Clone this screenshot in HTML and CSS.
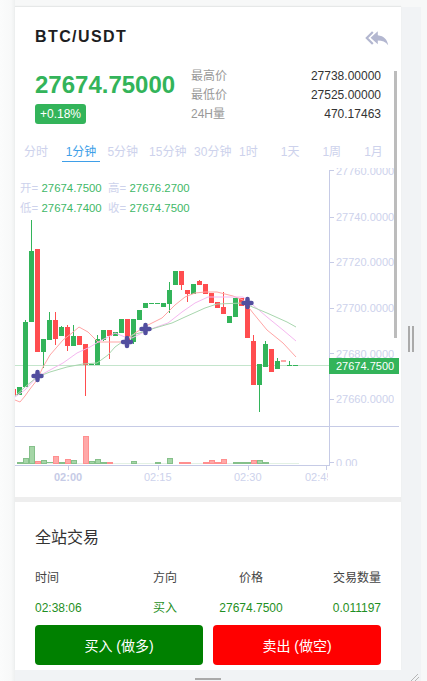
FILE: index.html
```html
<!DOCTYPE html>
<html lang="zh">
<head>
<meta charset="utf-8">
<title>BTC/USDT</title>
<link rel="stylesheet" href="styles.css">
</head>
<body>
<div class="shell">
  <main class="card">
    <header class="head">
      <h1 class="pair">BTC/USDT</h1>
      <svg class="back" viewBox="0 0 24 15" width="24" height="15">
        <path class="back-chev" d="M7.800 1 1.800 7l6 6"/>
        <path class="back-arrow" d="M12.800 .2 5.600 6.800l7.200 6.500V9.400c4.400 0 7.800 1.200 10.400 4.800C22.400 8.800 19 4.800 12.800 4.200z"/>
      </svg>
    </header>
    <section class="quote">
      <div class="quote-main">
        <div class="price">27674.75000</div>
        <span class="badge">+0.18%</span>
      </div>
      <dl class="stats">
        <div class="stat"><dt>最高价</dt><dd>27738.00000</dd></div>
        <div class="stat"><dt>最低价</dt><dd>27525.00000</dd></div>
        <div class="stat"><dt>24H量</dt><dd>470.17463</dd></div>
      </dl>
    </section>
    <nav class="tabs">
      <span class="tab">分时</span>
      <span class="tab active">1分钟</span>
      <span class="tab">5分钟</span>
      <span class="tab wide">15分钟</span>
      <span class="tab wide">30分钟</span>
      <span class="tab">1时</span>
      <span class="tab">1天</span>
      <span class="tab">1周</span>
      <span class="tab">1月</span>
    </nav>
    <svg class="chart" viewBox="15 168 386 329" width="386" height="329">
      <defs>
        <clipPath id="plot"><rect x="15" y="168" width="314" height="258"/></clipPath>
        <clipPath id="xlabels"><rect x="15" y="466" width="313" height="20"/></clipPath>
        <clipPath id="ylabels"><rect x="330" y="168" width="64" height="298"/></clipPath>
      </defs>

      <g class="legend">
        <text x="20" y="192">开=</text><text class="up" x="41.500" y="192">27674.7500</text>
        <text x="108" y="192">高=</text><text class="up" x="129.500" y="192">27676.2700</text>
        <text x="20" y="212">低=</text><text class="up" x="41.500" y="212">27674.7400</text>
        <text x="108" y="212">收=</text><text class="up" x="129.500" y="212">27674.7500</text>
      </g>

      <line class="last" x1="15" y1="365.500" x2="329" y2="365.500"/>

      <g clip-path="url(#plot)">
        <g class="ca-red">
          <rect x="11" y="389" width="5" height="6"/>
          <rect x="35" y="249" width="5" height="103"/>
          <rect x="55" y="312" width="1" height="33"/><rect x="53" y="320" width="5" height="19"/>
          <rect x="67" y="325" width="1" height="26"/><rect x="65" y="327" width="5" height="19"/>
          <rect x="77" y="336" width="5" height="9"/>
          <rect x="85" y="344" width="1" height="52"/><rect x="83" y="344" width="5" height="21"/>
          <rect x="109" y="336" width="1" height="23"/><rect x="107" y="330" width="5" height="6"/>
          <rect x="125" y="319" width="5" height="23"/>
          <rect x="181" y="285" width="1" height="5"/><rect x="179" y="271" width="5" height="14"/>
          <rect x="187" y="294" width="1" height="8"/><rect x="185" y="290" width="5" height="4"/>
          <rect x="199" y="280" width="1" height="2"/><rect x="197" y="281" width="5" height="4"/>
          <rect x="203" y="284" width="5" height="10"/>
          <rect x="209" y="293" width="5" height="10"/>
          <rect x="215" y="302" width="5" height="6"/>
          <rect x="223" y="292" width="1" height="16"/><rect x="221" y="307" width="5" height="7"/>
          <rect x="239" y="298" width="5" height="8"/>
          <rect x="245" y="305" width="5" height="33"/>
          <rect x="253" y="335" width="1" height="7"/><rect x="251" y="341" width="5" height="44"/>
          <rect x="269" y="349" width="5" height="23"/>
          <rect x="281" y="360.500" width="5" height="1"/>
        </g>
        <g class="ca-green">
          <rect x="17" y="387" width="5" height="8"/>
          <rect x="25" y="320" width="1" height="3"/><rect x="23" y="322" width="5" height="65"/>
          <rect x="31" y="220" width="1" height="32"/><rect x="29" y="251" width="5" height="71"/>
          <rect x="43" y="352" width="1" height="16"/><rect x="41" y="339" width="5" height="13"/>
          <rect x="49" y="312" width="1" height="9"/><rect x="47" y="320" width="5" height="20"/>
          <rect x="61" y="326" width="1" height="2"/><rect x="59" y="327" width="5" height="9"/>
          <rect x="73" y="325" width="1" height="12"/><rect x="71" y="336" width="5" height="10"/>
          <rect x="89" y="364" width="5" height="1"/>
          <rect x="97" y="335" width="1" height="5"/><rect x="95" y="339" width="5" height="26"/>
          <rect x="103" y="330" width="1" height="11"/><rect x="101" y="330" width="5" height="10"/>
          <rect x="113" y="332" width="5" height="4"/>
          <rect x="119" y="319" width="5" height="14"/>
          <rect x="133" y="342" width="1" height="2"/><rect x="131" y="319" width="5" height="23"/>
          <rect x="137" y="310" width="5" height="10"/>
          <rect x="143" y="303" width="5" height="5"/>
          <rect x="149" y="303" width="5" height="1"/>
          <rect x="155" y="303" width="5" height="1"/>
          <rect x="161" y="303" width="5" height="4"/>
          <rect x="169" y="282" width="1" height="31"/><rect x="167" y="290" width="5" height="14"/>
          <rect x="173" y="271" width="5" height="14"/>
          <rect x="191" y="284" width="5" height="10"/>
          <rect x="227" y="316" width="5" height="7"/>
          <rect x="233" y="298" width="5" height="19"/>
          <rect x="259" y="385" width="1" height="27"/><rect x="257" y="364" width="5" height="21"/>
          <rect x="265" y="341" width="1" height="4"/><rect x="263" y="344" width="5" height="23"/>
          <rect x="277" y="358" width="1" height="4"/><rect x="275" y="361" width="5" height="8"/>
          <rect x="289" y="361" width="1" height="4"/><rect x="287" y="365" width="5" height="1"/>
          <rect x="293" y="365" width="5" height="1"/>
        </g>
        <polyline class="ma ma-red" points="15,400 20,402 25,396 30,389 37,380 43,367 50,355 63,340 72,333 79,327 88,332 98,342 110,342 125,342 135,333 148,325 162,318 175,305 185,297 195,293 205,292 217,292 233,296 243,300 253,313 267,330 283,343 296,357"/>
        <polyline class="ma ma-pink" points="15,397 25,390 37,377 50,370 63,363 77,353 90,347 100,341 110,336 115,333 125,337 132,338 140,334 148,330 168,323 182,312 195,303 208,297 217,297 243,297 253,305 267,317 283,330 296,341"/>
        <polyline class="ma ma-green" points="15,396 25,387 37,377 50,372 67,367 83,364 97,363 108,355 115,347 132,335 143,332 155,328 172,323 185,317 205,308 217,304 243,303 267,313 287,322 296,327"/>
        <g class="mark">
          <path d="M37.500 372v8M33.500 376h8"/>
          <path d="M127 338v8M123 342h8"/>
          <path d="M145.500 325v8M141.500 329h8"/>
          <path d="M247.500 299v8M243.500 303h8"/>
        </g>
      </g>

      <g class="vol-green">
        <rect x="17.500" y="462.500" width="5" height="1"/>
        <rect x="23.500" y="458.500" width="5" height="5"/>
        <rect x="29.500" y="446.500" width="5" height="17"/>
        <rect x="41.500" y="460.500" width="5" height="3"/>
        <rect x="47.500" y="462.500" width="5" height="1"/>
        <rect x="59.500" y="462.500" width="5" height="1"/>
        <rect x="71.500" y="460.500" width="5" height="3"/>
        <rect x="89.500" y="461.500" width="5" height="2"/>
        <rect x="95.500" y="459.500" width="5" height="4"/>
        <rect x="101.500" y="462.500" width="5" height="1"/>
        <rect x="131.500" y="461.500" width="5" height="2"/>
        <rect x="155.500" y="462.500" width="5" height="1"/>
        <rect x="167.500" y="458.500" width="5" height="5"/>
        <rect x="233.500" y="462.500" width="17" height="1"/>
        <rect x="257.500" y="460.500" width="5" height="3"/>
        <rect x="263.500" y="462.500" width="5" height="1"/>
      </g>
      <g class="vol-red">
        <rect x="35.500" y="461.500" width="5" height="2"/>
        <rect x="53.500" y="456.500" width="5" height="7"/>
        <rect x="65.500" y="459.500" width="5" height="4"/>
        <rect x="83.500" y="436.500" width="5" height="27"/>
        <rect x="107.500" y="462.500" width="5" height="1"/>
        <rect x="179.500" y="462.500" width="11" height="1"/>
        <rect x="203.500" y="462.500" width="5" height="1"/>
        <rect x="209.500" y="460.500" width="5" height="3"/>
        <rect x="215.500" y="462.500" width="5" height="1"/>
        <rect x="221.500" y="459.500" width="5" height="4"/>
        <rect x="251.500" y="460.500" width="5" height="3"/>
      </g>
      <path class="vol-faint" d="M47 463.500h6M77 463.500h6M113 463.500h18M137 463.500h18M161 463.500h6M191 463.500h12M227 463.500h6M269 463.500h30"/>

      <path class="axis" d="M15 426.500H399M15 465.500H329.500M329.500 170V466"/>
      <path class="axis" d="M329 170.500h5M329 217.500h5M329 262.500h5M329 308.500h5M329 353.500h5M329 399.500h5M329 462.500h5M68.500 466v4M158.500 466v4M248.500 466v4M326.500 466v4"/>

      <g clip-path="url(#ylabels)" class="ylabel">
        <text x="336" y="175">27760.0000</text>
        <text x="336" y="221">27740.0000</text>
        <text x="336" y="266">27720.0000</text>
        <text x="336" y="312">27700.0000</text>
        <text x="336" y="358">27680.0000</text>
        <text x="336" y="403">27660.0000</text>
        <text x="336" y="467">0.00</text>
      </g>
      <rect class="tag" x="329" y="358" width="70" height="16"/>
      <text class="tag-text" x="336" y="370">27674.7500</text>
      <g clip-path="url(#xlabels)" class="xlabel">
        <text class="strong" x="54" y="481">02:00</text>
        <text x="144" y="481">02:15</text>
        <text x="234" y="481">02:30</text>
        <text x="305" y="481">02:45</text>
      </g>
    </svg>

    <section class="trades">
      <h2 class="trades-title">全站交易</h2>
      <div class="trade-grid head-row">
        <span>时间</span><span>方向</span><span class="center">价格</span><span class="right">交易数量</span>
      </div>
      <div class="trade-grid data-row">
        <span>02:38:06</span><span>买入</span><span class="center">27674.7500</span><span class="right">0.011197</span>
      </div>
      <div class="actions">
        <button class="btn buy">买入 (做多)</button>
        <button class="btn sell">卖出 (做空)</button>
      </div>
    </section>
  </main>

  <div class="scrollbar"></div>
  <div class="split-v"></div>
  <div class="split-h"></div>
  <svg class="grip" viewBox="0 0 10 8" width="10" height="8">
    <path d="M1 8 8 1M5 8 9 4"/>
  </svg>
</div>
</body>
</html>
```
FILE: styles.css
```css
* { box-sizing: border-box; }
html, body { margin: 0; padding: 0; height: 100%; }
body {
  overflow: hidden;
  background: linear-gradient(90deg, #fbfcfc 0, #f8f9f9 11px, #eef0f0 15px, #f7f8f8 15px);
  font-family: "Liberation Sans", "Noto Sans CJK SC", sans-serif;
  color: #333;
}
.shell {
  position: relative;
  margin: 7px 0 0 15px;
  width: 406px;
  height: 674px;
  padding-right: 20px;
  background: #f1f3f5;
}
.card {
  height: 663px;
  background: #fff;
  box-shadow: 0 -1px 1px #e6e8e8;
}
.head {
  height: 59px;
  padding: 0 12px 0 20px;
  display: flex;
  align-items: center;
  justify-content: space-between;
}
.pair {
  margin: 0;
  font-size: 16px;
  font-weight: 700;
  letter-spacing: 1.4px;
  color: #1d1d22;
}
.back { margin-top: 3px; }
.back-chev { fill: none; stroke: #b3b7d0; stroke-width: 2.200; }
.back-arrow { fill: #b3b7d0; }
.quote { display: flex; padding: 0 20px; height: 58px; }
.quote-main { width: 156px; padding-top: 5px; }
.price {
  font-size: 24px;
  line-height: 28px;
  font-weight: 700;
  color: #33b45a;
}
.badge {
  display: inline-block;
  margin-top: 5px;
  height: 20px;
  line-height: 20px;
  padding: 0 5px;
  border-radius: 3px;
  background: #33b45a;
  color: #fff;
  font-size: 12px;
  font-weight: 400;
}
.stats { flex: 1; margin: 0; padding-top: 1px; }
.stat {
  display: flex;
  justify-content: space-between;
  height: 19px;
  line-height: 19px;
  font-size: 12px;
}
.stat dt { color: #999; }
.stat dd { margin: 0; color: #333; }
.tabs {
  display: flex;
  margin-top: 17px;
  padding: 1px 0 0 9px;
  height: 21px;
  font-size: 12px;
  line-height: 20px;
  color: #cdd2ec;
}
.tab { width: 41.7px; flex: none; white-space: nowrap; }
.tab.wide { width: 45px; }
.tab.active {
  width: 38px;
  margin-left: -4px;
  margin-right: 7.7px;
  padding-left: 4px;
  color: #3f9fe8;
  border-bottom: 1px solid #3f9fe8;
}
.chart { display: block; margin-top: 6px; }
.legend text { font-size: 11.4px; fill: #cdd2ec; }
.legend text.up { fill: #3fb868; }
.last { stroke: #c4e5cc; stroke-width: 1; }
.ca-red rect { fill: #ff4d4f; }
.ca-green rect { fill: #33b45a; }
.ma { fill: none; stroke-width: 1; }
.ma-red { stroke: #ffa5a5; }
.ma-pink { stroke: #f5b8f0; }
.ma-green { stroke: #a8d6ae; }
.mark path { fill: none; stroke: #524e9f; stroke-width: 4.500; stroke-linecap: round; }
.vol-green rect { fill: #a5d6a7; stroke: #85c08a; stroke-width: 1; }
.vol-red rect { fill: #ffa8a8; stroke: #ff8f8f; stroke-width: 1; }
.vol-faint { fill: none; stroke: #e3f1e4; stroke-width: 1; }
.axis { fill: none; stroke: #c6cbe6; stroke-width: 1; }
.ylabel text { font-size: 11px; fill: #cdd2ec; }
.xlabel text { font-size: 11px; fill: #cdd2ec; }
.xlabel text.strong { font-weight: 700; fill: #c6cbe6; }
.tag { fill: #33b45a; }
.tag-text { font-size: 11px; fill: #fff; }
.trades {
  margin-top: 5px;
  padding: 25px 20px 5px;
  background: #fff;
  box-shadow: 0 -5px 0 #eee;
  height: 168px;
}
.trades-title {
  margin: 0 0 19px;
  font-size: 16px;
  line-height: 22px;
  font-weight: 400;
  color: #333;
}
.trade-grid {
  display: grid;
  grid-template-columns: 118px 66px 64px 1fr;
  height: 20px;
  line-height: 20px;
  font-size: 12px;
  white-space: nowrap;
}
.center { text-align: center; }
.right { text-align: right; }
.head-row { color: #444; }
.data-row { margin-top: 10px; color: #1f8f24; }
.actions { display: flex; gap: 10px; margin-top: 7px; }
.btn {
  flex: 1;
  height: 40px;
  border: 0;
  border-radius: 4px;
  color: #fff;
  font-family: inherit;
  font-size: 14px;
  padding: 0;
}
.buy { background: #008000; }
.sell { background: #f00; }
.scrollbar {
  position: absolute;
  left: 379px;
  top: 64px;
  width: 3px;
  height: 267px;
  background: #bcbcbc;
}
.split-v {
  position: absolute;
  left: 393px;
  top: 319px;
  width: 6px;
  height: 26px;
  border-left: 2px solid #aaa;
  border-right: 2px solid #aaa;
}
.split-h {
  position: absolute;
  left: 180px;
  top: 671px;
  width: 26px;
  height: 2px;
  background: #aaa;
}
.grip {
  position: absolute;
  left: 395px;
  top: 666px;
}
.grip path { fill: none; stroke: #b5b5b5; stroke-width: 1; }
```
